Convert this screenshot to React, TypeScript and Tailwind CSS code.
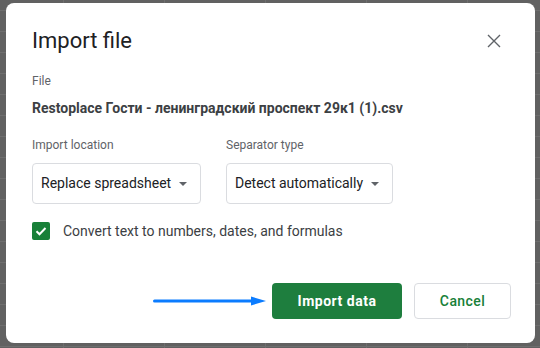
import React from 'react';

const Caret: React.FC = () => (
  <svg className="ml-2 shrink-0" width="8" height="4" viewBox="0 0 8 4" fill="#5f6368">
    <path d="M0 0h8L4 4z" />
  </svg>
);

const App: React.FC = () => {
  return (
    <div
      className="w-[540px] h-[348px] pt-[3px] pl-[6px] bg-[#616161] bg-[linear-gradient(to_right,#6e6e6e_1px,transparent_1px),linear-gradient(to_bottom,#6e6e6e_1px,transparent_1px)] bg-size-[101px_21px] bg-position-[63px_10px] overflow-hidden"
      style={{ fontFamily: 'Roboto, "Noto Sans", sans-serif' }}
    >
      {/* Dialog */}
      <div className="w-[529px] h-[340px] rounded-lg bg-white pl-[26px] pr-[24px] pt-[24px] flex flex-col">
        {/* Header */}
        <div className="flex items-center justify-between h-[28px]">
          <h1 className="text-[22px] leading-[28px] text-[#202124] font-normal">Import file</h1>
          <button className="w-6 h-6 mr-[5px] flex items-center justify-center text-[#5f6368]">
            <svg width="24" height="24" viewBox="0 0 24 24" fill="none" stroke="currentColor" strokeWidth="1.4">
              <path d="M6 6l12 12M18 6L6 18" />
            </svg>
          </button>
        </div>

        {/* File */}
        <div className="mt-[18px] text-[12px] leading-4 text-[#5f6368]">File</div>
        <div className="mt-[9px] text-[14px] leading-5 font-bold text-[#3c4043] whitespace-nowrap">
          Restoplace Гости - ленинградский проспект 29к1 (1).csv
        </div>

        {/* Selects */}
        <div className="mt-[19px] flex gap-[25px]">
          <div className="flex flex-col">
            <div className="text-[12px] leading-4 text-[#5f6368]">Import location</div>
            <div className="mt-[10px] w-[169px] h-[41px] border border-[#dadce0] rounded-[4px] pl-[8px] flex items-center text-[14px] text-[#202124]">
              <span>Replace spreadsheet</span>
              <Caret />
            </div>
          </div>
          <div className="flex flex-col">
            <div className="text-[12px] leading-4 text-[#5f6368]">Separator type</div>
            <div className="mt-[10px] w-[167px] h-[41px] border border-[#dadce0] rounded-[4px] pl-[8px] flex items-center text-[14px] text-[#202124]">
              <span>Detect automatically</span>
              <Caret />
            </div>
          </div>
        </div>

        {/* Checkbox */}
        <div className="mt-[18px] flex items-center h-[18px]">
          <div className="w-[18px] h-[18px] rounded-[2px] bg-[#188038] flex items-center justify-center">
            <svg width="14" height="14" viewBox="0 0 14 14" fill="none" stroke="white" strokeWidth="2">
              <path d="M2.5 7.2l3 3L11.5 4" />
            </svg>
          </div>
          <span className="ml-[13px] text-[14px] text-[#3c4043]">Convert text to numbers, dates, and formulas</span>
        </div>

        {/* Actions */}
        <div className="mt-[43px] flex items-center justify-end">
          <svg width="113" height="10" viewBox="0 0 113 10" className="mr-[6px]">
            <path d="M1.5 5H100" stroke="#0b7cff" strokeWidth="3" strokeLinecap="round" />
            <path d="M98 0.5L113 5L98 9.5z" fill="#0b7cff" />
          </svg>
          <button className="w-[130px] h-[36px] rounded-[4px] bg-[#1e7e3e] text-white text-[14px] font-bold tracking-[0.5px]">
            Import data
          </button>
          <button className="ml-[12px] w-[97px] h-[36px] rounded-[4px] border border-[#dadce0] bg-white text-[#188038] text-[14px] font-medium tracking-[0.4px]">
            Cancel
          </button>
        </div>
      </div>
    </div>
  );
};

export default App;
